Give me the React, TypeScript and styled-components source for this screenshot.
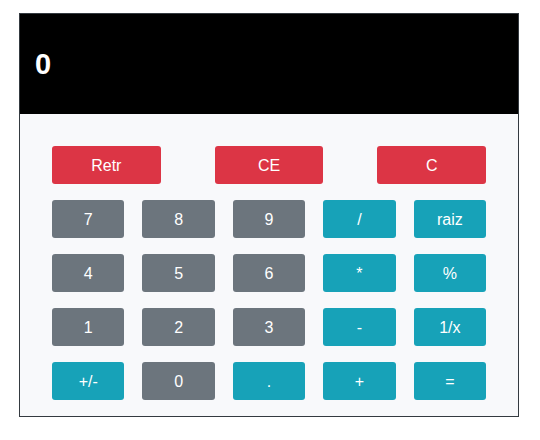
import React from "react";
import styled, { createGlobalStyle } from "styled-components";

const GlobalStyle = createGlobalStyle`
  *, *::before, *::after { box-sizing: border-box; }
  body {
    margin: 0;
    background: #fff;
    font-family: "Liberation Sans", Arial, sans-serif;
    font-size: 16px;
    line-height: 24px;
  }
`;

const Calculator = styled.main`
  margin: 13px 21px 0 19px;
  border: 1px solid #343a40;
  background: #f8f9fb;
`;

const Display = styled.output`
  display: flex;
  align-items: center;
  height: 100px;
  padding: 0 15px;
  background: #000;
  color: #fff;
  font-size: 29px;
  line-height: 36px;
  font-weight: 700;
`;

const Keypad = styled.div`
  display: flex;
  flex-direction: column;
  gap: 16px;
  padding: 32px 32px 16px;
`;

const KeyRow = styled.div<{ $columns: number; $gap: number }>`
  display: grid;
  grid-template-columns: repeat(${(p) => p.$columns}, minmax(0, 1fr));
  column-gap: ${(p) => p.$gap}px;
`;

type Tone = "danger" | "digit" | "operator";

const tones: Record<Tone, string> = {
  danger: "#dc3545",
  digit: "#6c757d",
  operator: "#17a2b8",
};

const Key = styled.button<{ $tone: Tone }>`
  height: 38px;
  padding: 8px 12px 6px;
  border: 0;
  border-radius: 3px;
  background: ${(p) => tones[p.$tone]};
  color: #fff;
  font: inherit;
  text-align: center;
  cursor: pointer;
`;

const clearKeys = ["Retr", "CE", "C"];

const rows = [
  ["7", "8", "9", "/", "raiz"],
  ["4", "5", "6", "*", "%"],
  ["1", "2", "3", "-", "1/x"],
  ["+/-", "0", ".", "+", "="],
];

export default function App() {
  return (
    <>
      <GlobalStyle />
      <Calculator>
        <Display>0</Display>
        <Keypad>
          <KeyRow $columns={3} $gap={54}>
            {clearKeys.map((label) => (
              <Key key={label} type="button" $tone="danger">{label}</Key>
            ))}
          </KeyRow>
          {rows.map((row) => (
            <KeyRow key={row[0]} $columns={5} $gap={18}>
              {row.map((label) => (
                <Key key={label} type="button" $tone={/^\d$/.test(label) ? "digit" : "operator"}>
                  {label}
                </Key>
              ))}
            </KeyRow>
          ))}
        </Keypad>
      </Calculator>
    </>
  );
}
